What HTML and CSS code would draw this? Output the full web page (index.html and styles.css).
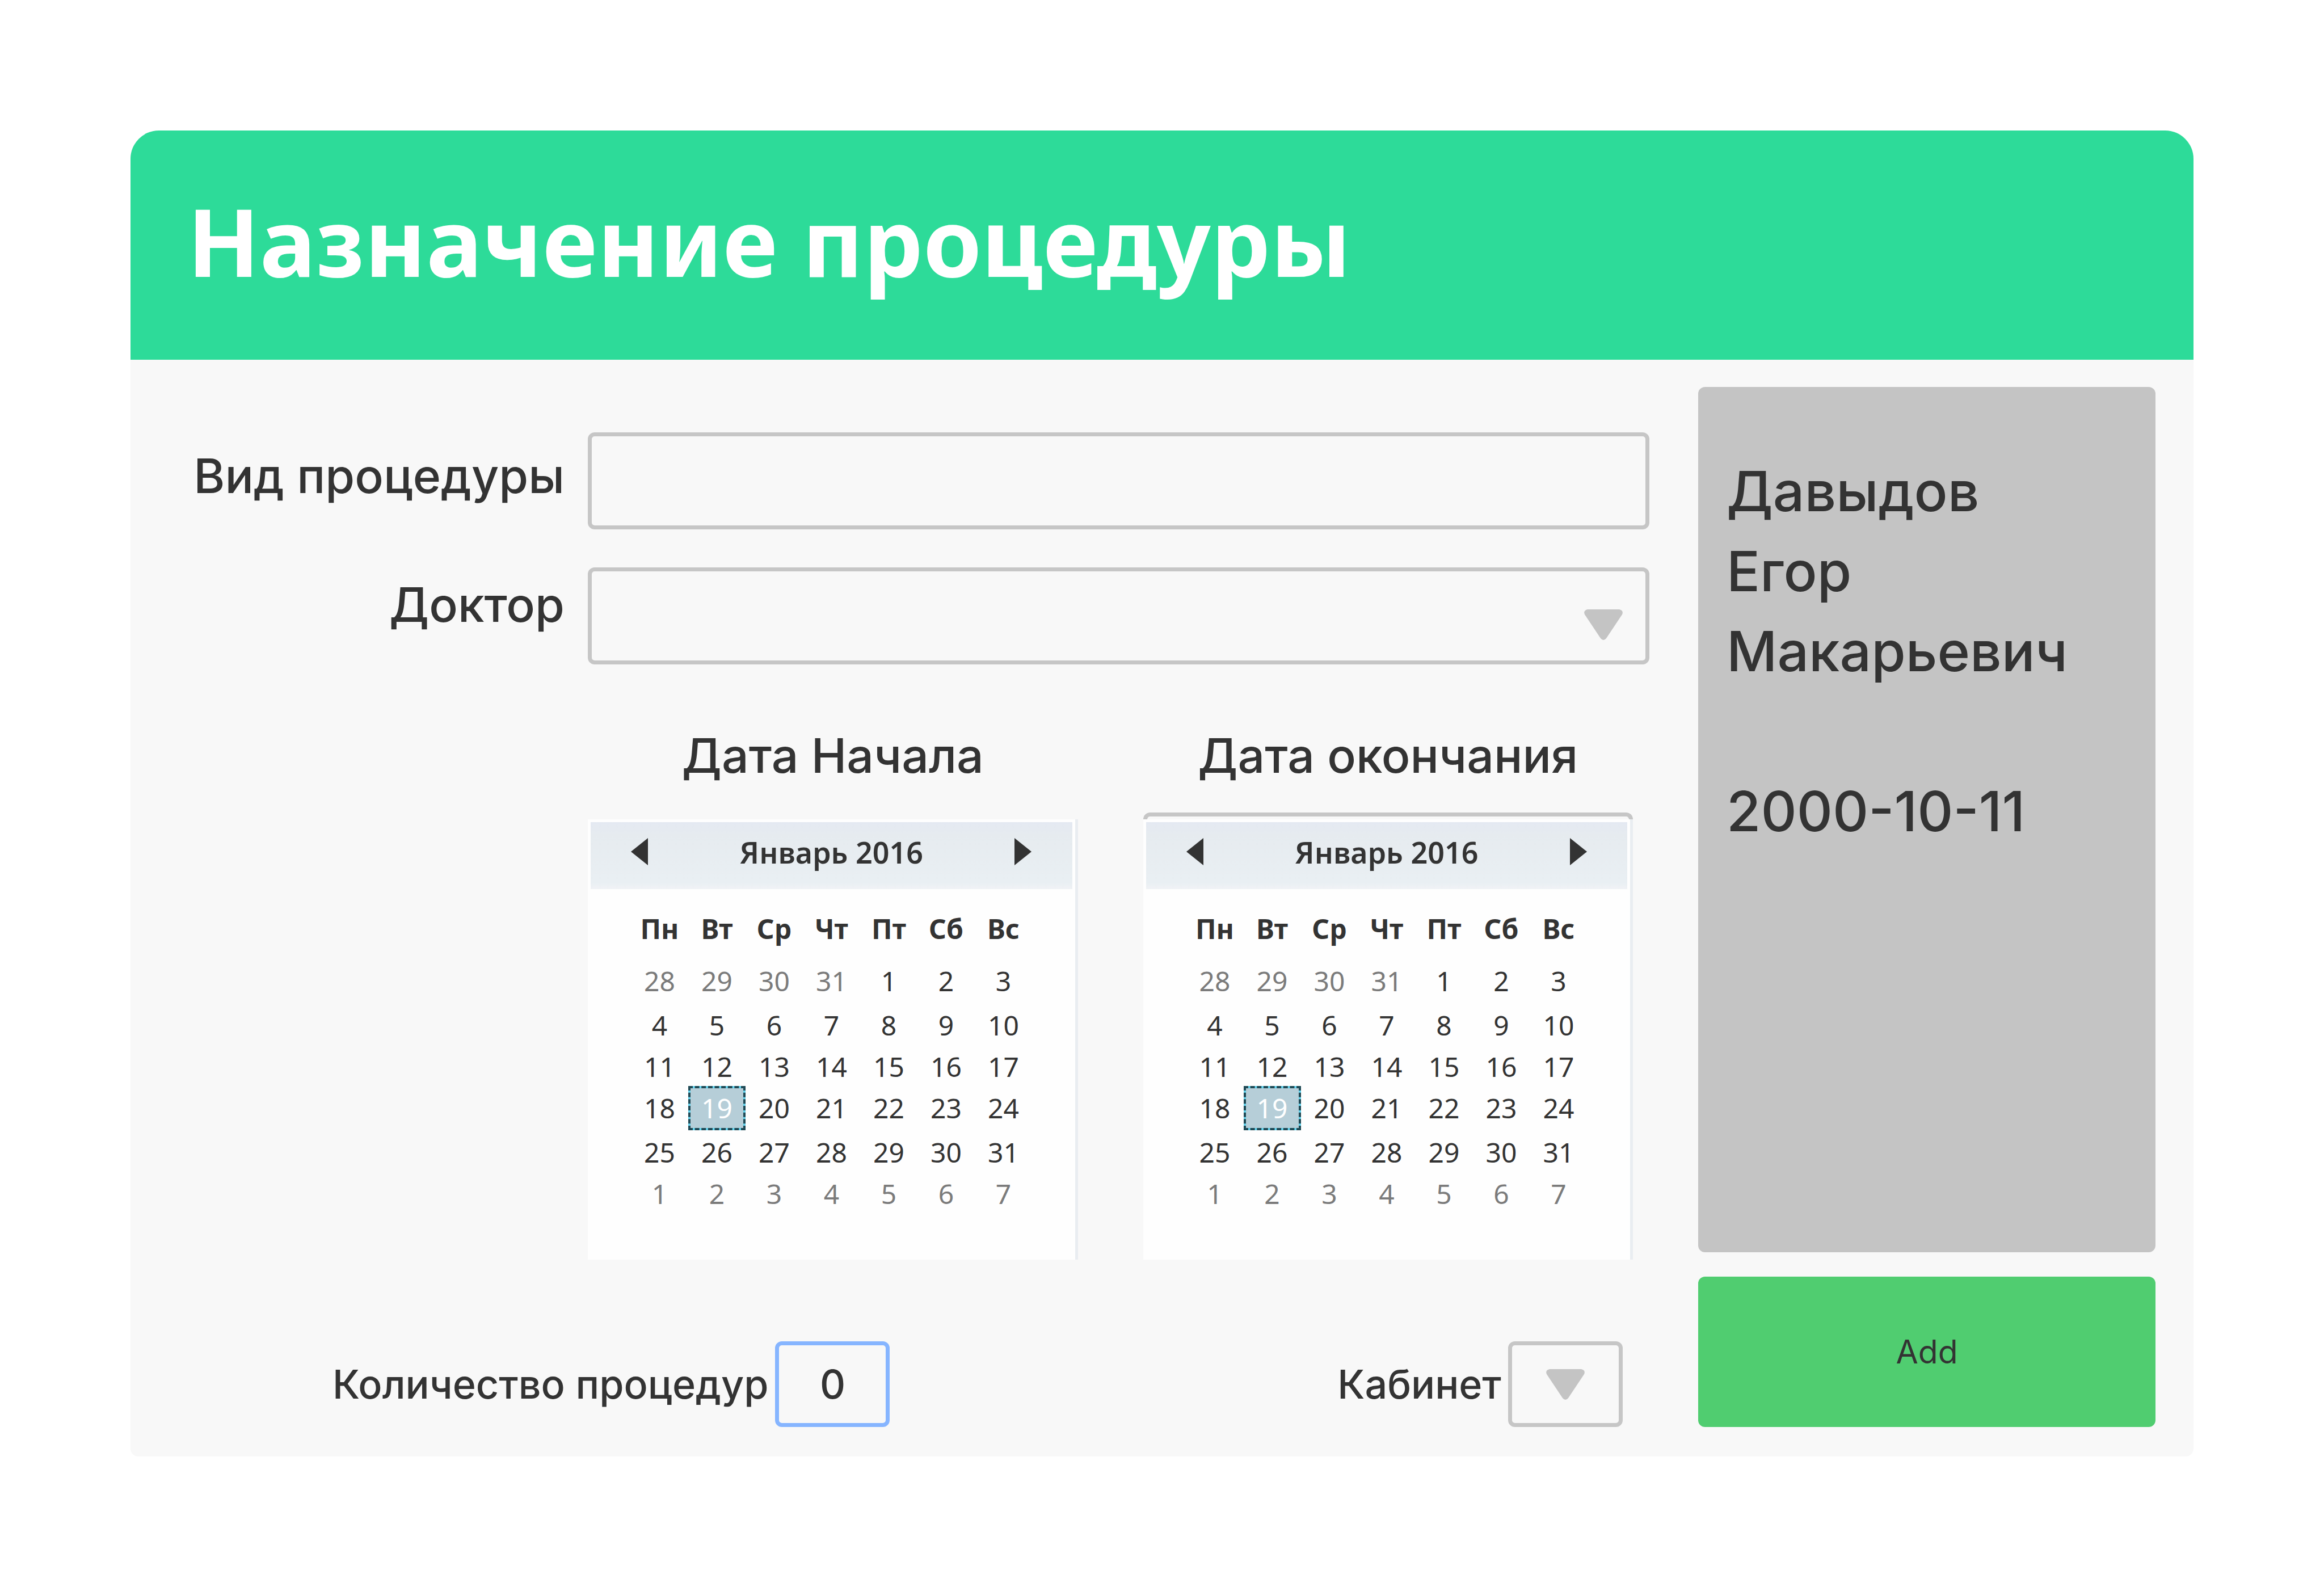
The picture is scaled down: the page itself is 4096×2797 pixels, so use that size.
FILE: index.html
```html
<!DOCTYPE html>
<html lang="ru">
<head>
<meta charset="utf-8">
<title>Назначение процедуры</title>
<link rel="stylesheet" href="styles.css">
</head>
<body>
<main class="card">
  <header class="card-header">
    <h1 class="title">Назначение процедуры</h1>
  </header>
  <form class="card-body">
    <div class="fields">
      <div class="main-fields">
        <div class="labels">
          <label class="label" for="kind">Вид процедуры</label>
          <label class="label" for="doctor">Доктор</label>
        </div>
        <div class="inputs">
          <input class="control wide" id="kind" type="text">
          <div class="select-wrap">
            <select class="control wide" id="doctor"><option></option></select>
            <svg class="caret" viewBox="0 0 68 54" aria-hidden="true"><path d="M6 0H62Q70 2 67 9L39 51Q34 57 29 51L1 9Q-2 2 6 0Z"/></svg>
          </div>
          <div class="dates">
            <section class="date">
              <h2 class="label">Дата Начала</h2>
              <div class="calendar">
                <div class="month">
                  <button class="nav" type="button" aria-label="Предыдущий месяц"><svg class="arrow" viewBox="0 0 32 48"><path d="M31 0V48L1 24Z"/></svg></button>
                  <span>Январь 2016</span>
                  <button class="nav" type="button" aria-label="Следующий месяц"><svg class="arrow" viewBox="0 0 32 48"><path d="M1 0V48L31 24Z"/></svg></button>
                </div>
                <table class="days">
                  <thead><tr><th>Пн</th><th>Вт</th><th>Ср</th><th>Чт</th><th>Пт</th><th>Сб</th><th>Вс</th></tr></thead>
                  <tbody>
                    <tr><td class="other">28</td><td class="other">29</td><td class="other">30</td><td class="other">31</td><td>1</td><td>2</td><td>3</td></tr>
                    <tr><td>4</td><td>5</td><td>6</td><td>7</td><td>8</td><td>9</td><td>10</td></tr>
                    <tr class="short"><td>11</td><td>12</td><td>13</td><td>14</td><td>15</td><td>16</td><td>17</td></tr>
                    <tr><td>18</td><td class="selected">19</td><td>20</td><td>21</td><td>22</td><td>23</td><td>24</td></tr>
                    <tr><td>25</td><td>26</td><td>27</td><td>28</td><td>29</td><td>30</td><td>31</td></tr>
                    <tr class="short"><td class="other">1</td><td class="other">2</td><td class="other">3</td><td class="other">4</td><td class="other">5</td><td class="other">6</td><td class="other">7</td></tr>
                  </tbody>
                </table>
              </div>
            </section>
            <section class="date framed">
              <h2 class="label">Дата окончания</h2>
              <div class="calendar">
                <div class="month">
                  <button class="nav" type="button" aria-label="Предыдущий месяц"><svg class="arrow" viewBox="0 0 32 48"><path d="M31 0V48L1 24Z"/></svg></button>
                  <span>Январь 2016</span>
                  <button class="nav" type="button" aria-label="Следующий месяц"><svg class="arrow" viewBox="0 0 32 48"><path d="M1 0V48L31 24Z"/></svg></button>
                </div>
                <table class="days">
                  <thead><tr><th>Пн</th><th>Вт</th><th>Ср</th><th>Чт</th><th>Пт</th><th>Сб</th><th>Вс</th></tr></thead>
                  <tbody>
                    <tr><td class="other">28</td><td class="other">29</td><td class="other">30</td><td class="other">31</td><td>1</td><td>2</td><td>3</td></tr>
                    <tr><td>4</td><td>5</td><td>6</td><td>7</td><td>8</td><td>9</td><td>10</td></tr>
                    <tr class="short"><td>11</td><td>12</td><td>13</td><td>14</td><td>15</td><td>16</td><td>17</td></tr>
                    <tr><td>18</td><td class="selected">19</td><td>20</td><td>21</td><td>22</td><td>23</td><td>24</td></tr>
                    <tr><td>25</td><td>26</td><td>27</td><td>28</td><td>29</td><td>30</td><td>31</td></tr>
                    <tr class="short"><td class="other">1</td><td class="other">2</td><td class="other">3</td><td class="other">4</td><td class="other">5</td><td class="other">6</td><td class="other">7</td></tr>
                  </tbody>
                </table>
              </div>
            </section>
          </div>
        </div>
      </div>
      <div class="extras">
        <div class="extra">
          <label for="count">Количество процедур</label>
          <input class="control small active" id="count" type="text" value="0">
        </div>
        <div class="extra">
          <label for="room">Кабинет</label>
          <div class="select-wrap">
            <select class="control small" id="room"><option></option></select>
            <svg class="caret" viewBox="0 0 68 54" aria-hidden="true"><path d="M6 0H62Q70 2 67 9L39 51Q34 57 29 51L1 9Q-2 2 6 0Z"/></svg>
          </div>
        </div>
      </div>
    </div>
    <aside class="side">
      <div class="patient">
        <p>Давыдов<br>Егор<br>Макарьевич</p>
        <p>2000-10-11</p>
      </div>
      <button class="add" type="submit">Add</button>
    </aside>
  </form>
</main>
</body>
</html>
```
FILE: styles.css
```css
* { box-sizing: border-box; }

body {
  margin: 0;
  padding: 230px;
  background: #fff;
  color: #333;
  font-family: Inter, sans-serif;
  font-weight: 500;
}

h1, h2, p { margin: 0; font-weight: inherit; }

.card {
  background: #f8f8f8;
  border-radius: 50px 50px 14px 14px;
  overflow: hidden;
}

.card-header {
  height: 404px;
  padding: 84px 100px 0;
  background: #2ddb99;
}

.title {
  color: #fff;
  font: 700 166px/220px "Noto Sans", sans-serif;
}

.card-body {
  display: grid;
  grid-template-columns: 1fr 806px;
  gap: 86px;
  padding: 48px 67px 52px;
}

.fields {
  display: flex;
  flex-direction: column;
  gap: 144px;
  padding-top: 80px;
}

.main-fields {
  display: grid;
  grid-template-columns: 698px 1fr;
  gap: 41px;
}

.labels {
  display: flex;
  flex-direction: column;
  gap: 123px;
  padding-top: 25px;
  text-align: right;
}

.label {
  font-size: 84px;
  line-height: 104px;
}

.inputs { display: flex; flex-direction: column; }

.control {
  display: block;
  border: 7px solid #c6c6c6;
  border-radius: 12px;
  background: transparent;
  color: inherit;
  font: inherit;
  appearance: none;
  outline: none;
}

.wide {
  width: 100%;
  height: 171px;
  padding: 0 40px;
  font-size: 84px;
}

.small {
  width: 202px;
  height: 151px;
  padding: 0;
  font-size: 70px;
  text-align: center;
}

.active { border-color: #86b5ff; }

.select-wrap { position: relative; }

.inputs > .select-wrap { margin-top: 67px; }

.caret {
  position: absolute;
  top: 74px;
  right: 47px;
  width: 68px;
  height: 54px;
  fill: #c4c4c4;
  pointer-events: none;
}

.extra .caret { top: 49px; right: 67px; }

.dates {
  display: grid;
  grid-template-columns: 1fr 1fr;
  gap: 115px;
  margin-top: 109px;
  padding-right: 29px;
}

.date {
  position: relative;
  display: flex;
  flex-direction: column;
  gap: 60px;
  text-align: center;
}

.framed::before {
  content: "";
  position: absolute;
  top: 152px;
  left: 0;
  right: 0;
  height: 24px;
  border: 7px solid #c6c6c6;
  border-bottom: 0;
  border-radius: 12px 12px 0 0;
}

.calendar {
  position: relative;
  height: 776px;
  padding: 5px;
  background: #fefefe;
  border-right: 5px solid #e9edf1;
  font-family: "Noto Sans", sans-serif;
}

.month {
  display: flex;
  align-items: flex-start;
  justify-content: space-between;
  height: 118px;
  padding: 16px 69px 0;
  background: linear-gradient(#e4e9f2, #e6ebef 20%, #e9eff3 90%, #f0f2f5);
  font-size: 52px;
  font-weight: 600;
  line-height: 74px;
}

.nav {
  display: flex;
  padding: 12px 0;
  border: 0;
  background: none;
}

.arrow { width: 34px; height: 48px; fill: #333; }

.days {
  width: 707px;
  margin: 17px auto 0 71px;
  border-spacing: 0;
  table-layout: fixed;
  font-size: 48px;
  font-weight: 400;
  line-height: 64px;
}

.days th { height: 106px; padding: 0; font-weight: 700; }
.days td { height: 78px; padding: 0; }
.days .short td { height: 68px; }
.days .other { color: #7b7b7b; }

.days .selected {
  border: 4px dashed #1f4a56;
  background: linear-gradient(#b6ced8, #b6ced8) padding-box, #66d4ee border-box;
  color: #fff;
}

.extras {
  display: flex;
  justify-content: space-between;
  padding: 0 47px 0 289px;
}

.extra {
  display: flex;
  align-items: center;
  gap: 12px;
  font-size: 70px;
  line-height: 88px;
}

.side {
  display: flex;
  flex-direction: column;
  gap: 43px;
}

.patient {
  display: flex;
  flex: 1;
  flex-direction: column;
  gap: 141px;
  padding: 113px 50px;
  border-radius: 12px;
  background: #c4c4c4;
  font-size: 98px;
  line-height: 141px;
}

.add {
  height: 265px;
  border: 0;
  border-radius: 12px;
  background: #50cd70;
  color: inherit;
  font: 400 57px/70px Inter, sans-serif;
}
```
